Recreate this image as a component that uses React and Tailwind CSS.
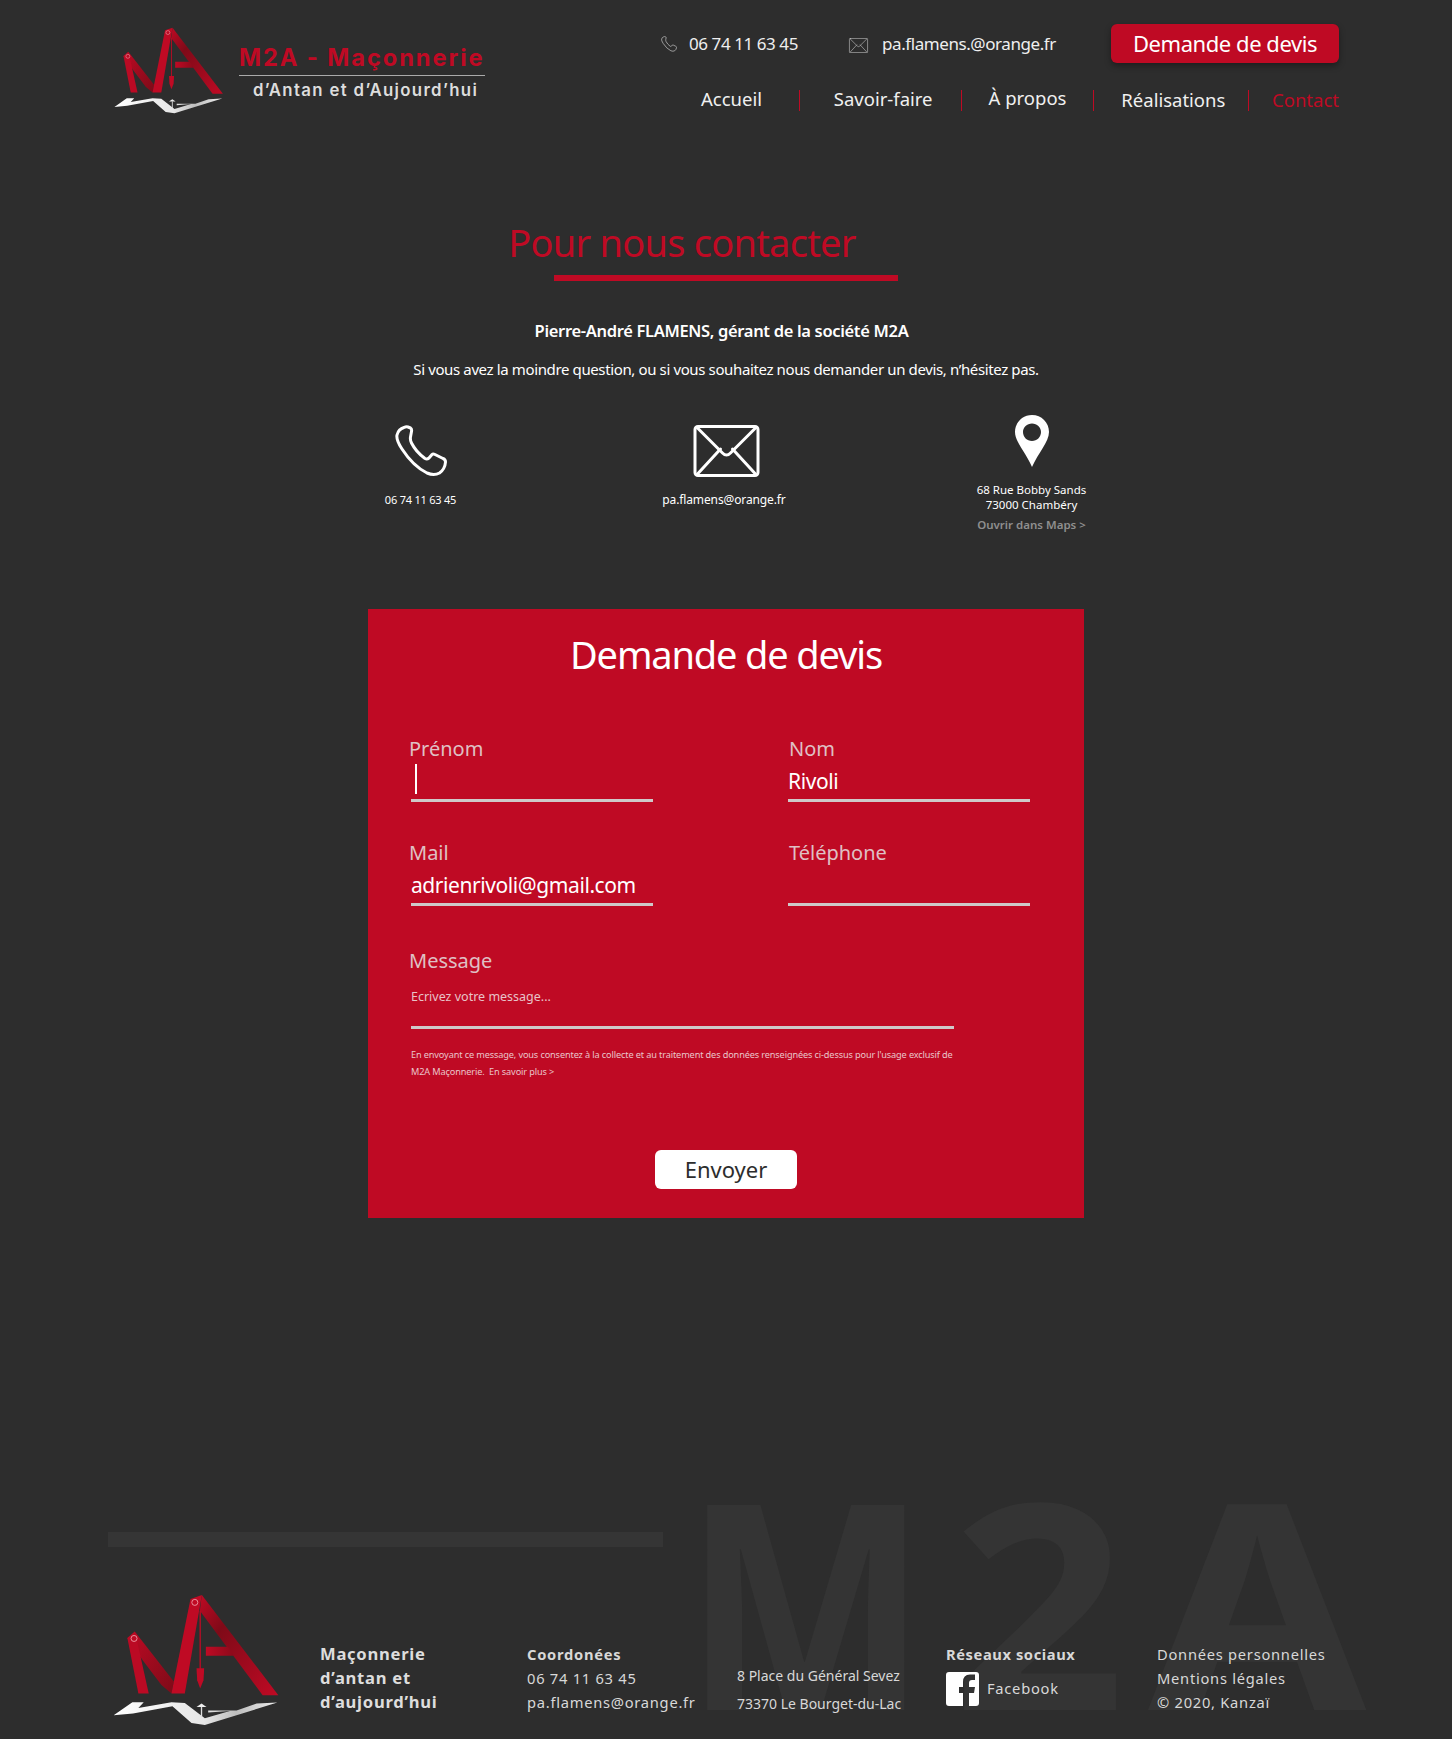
import React from 'react';

const Logo = ({ className, id }) => (
  <svg viewBox="70 100 500 395" className={className}>
    <defs>
      <linearGradient id={`${id}-a`} x1="0" y1="0" x2="1" y2="1">
        <stop offset="0" stopColor="#bf0a24" />
        <stop offset="0.3" stopColor="#7f0a18" />
        <stop offset="1" stopColor="#bf0a24" />
      </linearGradient>
      <linearGradient id={`${id}-b`} x1="0" y1="0" x2="1" y2="1">
        <stop offset="0" stopColor="#bf0a24" />
        <stop offset="1" stopColor="#7c0b18" />
      </linearGradient>
      <linearGradient id={`${id}-c`} x1="0" y1="0" x2="1" y2="0">
        <stop offset="0" stopColor="#bf0a24" />
        <stop offset="1" stopColor="#8a0a1a" />
      </linearGradient>
      <linearGradient id={`${id}-w`} x1="0" y1="0" x2="1" y2="0">
        <stop offset="0" stopColor="#ffffff" />
        <stop offset="0.55" stopColor="#e6e6e6" />
        <stop offset="0.75" stopColor="#bdbdbd" />
        <stop offset="1" stopColor="#ececec" />
      </linearGradient>
    </defs>
    <polygon points="113,232 135,212 252,362 245,398 215,372 160,300" fill={`url(#${id}-b)`} />
    <polygon points="113,232 138,222 177,398 146,398" fill="#bb0a24" />
    <polygon points="302,115 336,103 285,398 245,398" fill="#bf0a24" />
    <polygon points="336,103 565,403 518,403 330,150" fill={`url(#${id}-a)`} />
    <polygon points="348,258 414,258 433,285 348,285" fill={`url(#${id}-c)`} />
    <rect x="329" y="150" width="4" height="175" fill="#bf0a24" />
    <polygon points="320,322 343,322 341,358 331,383 322,358" fill="#bf0a24" />
    <circle cx="133" cy="233" r="9" fill="none" stroke="#f0a3ae" strokeWidth="2.5" />
    <circle cx="315" cy="125" r="9" fill="none" stroke="#f0a3ae" strokeWidth="2.5" />
    <polygon
      points="72,463 128,424 162,424 146,441 245,424 285,426 345,472 420,450 355,455 355,449 440,449 500,428 562,425 345,492 305,486 248,436 130,458"
      fill={`url(#${id}-w)`}
    />
    <polygon points="320,438 335,428 350,438" fill="#eeeeee" />
    <rect x="333" y="438" width="4" height="30" fill="#dddddd" />
  </svg>
);

const PhoneIcon = ({ className, strokeWidth = 3 }) => (
  <svg viewBox="0 0 52 52" className={className} fill="none" stroke="currentColor" strokeWidth={strokeWidth} strokeLinejoin="round">
    <path d="M13 2 L15.500 3 Q17 4 16.500 6.500 L15.500 12 Q15 15 16.500 18 Q21 27 30 33.500 Q32 34.500 34 33 L37 29.500 Q38 28.500 40 29.500 L48 33.500 Q50.500 34.500 50.500 37 Q50 44 44.500 48 Q39 51 32 48 Q18 41 7 24 Q1 15 2 10 Q3.500 4 9 2.500 Q11 1.500 13 2 Z" />
  </svg>
);

const MailIcon = ({ className, strokeWidth = 3 }) => (
  <svg viewBox="0 0 66 52" className={className} fill="none" stroke="currentColor" strokeWidth={strokeWidth} strokeLinejoin="round" strokeLinecap="round">
    <rect x="1.500" y="1.500" width="63" height="49" rx="3" />
    <path d="M4 3 L29 28 Q33 32 37 28 L62 3" />
    <path d="M4 49 L27 24 M62 49 L39 24" />
  </svg>
);

const PinIcon = ({ className }) => (
  <svg viewBox="0 0 34 52" className={className} fill="currentColor">
    <path fillRule="evenodd" d="M17 0 C7.500 0 0 7.500 0 17 C0 27 11 38 17 52 C23 38 34 27 34 17 C34 7.500 26.500 0 17 0 Z M17 8.500 C22 8.500 26 12.500 26 17 C26 22 22 26 17 26 C12 26 8 22 8 17 C8 12.500 12 8.500 17 8.500 Z" />
  </svg>
);

const Sep = () => <span className="w-px h-[21px] bg-[#bf0a24]" />;

const Field = ({ label, value, caret, labelClass, className }) => (
  <div className={className}>
    <div className={`text-[20px] leading-[26px] text-[#dfc0c4] ${labelClass || ''}`}>{label}</div>
    <div className="h-[40px] w-[242px] ml-[2px] border-b-[3px] border-[#cfc9c9] flex items-center text-[21px] tracking-[-0.02em] text-white">
      {caret && <span className="w-[2px] h-[30px] bg-white ml-[4px] -mt-[3px]" />}
      {value && <span className="mt-[3px]">{value}</span>}
    </div>
  </div>
);

const App = () => {
  return (
    <div className="relative w-[1452px] h-[1739px] overflow-hidden bg-[#2d2d2d] font-['Noto_Sans',sans-serif] text-white">
      {/* M2A watermark behind everything in the footer */}
      <div className="absolute left-0 top-[1440px] w-full h-[299px] font-bold text-[#343434] select-none">
        <div className="absolute left-[108px] top-[92px] w-[555px] h-[15px] bg-[#353535]" />
        <span className="absolute left-[684px] top-[19px] text-[287px] leading-[280px] origin-left scale-x-[0.9]">M</span>
        <span className="absolute left-[952px] top-[19px] text-[287px] leading-[280px] origin-left scale-x-[1.06]">2</span>
        <span className="absolute left-[1148px] top-[19px] text-[287px] leading-[280px] origin-left scale-x-[1.1]">A</span>
      </div>

      <header className="relative flex justify-between pl-[114px] pr-[113px] pt-[24px]">
        <div className="flex pt-[3px]">
          <Logo id="head" className="w-[110px] h-[87px]" />
          <div className="w-[246px] ml-[15px] mt-[18px] font-['Inter',sans-serif]">
            <div className="text-[23.700px] leading-[26px] font-bold tracking-[0.08em] text-[#bf0a24] whitespace-nowrap">M2A - Maçonnerie</div>
            <div className="h-px bg-[#aaaaaa] mt-[4px]" />
            <div className="text-[16.800px] leading-[22px] font-semibold tracking-[0.08em] text-[#dddddd] ml-[14px] mt-[3px] whitespace-nowrap">d’Antan et d’Aujourd’hui</div>
          </div>
        </div>
        <div className="w-[678px]">
          <div className="flex items-center h-[39px] text-[17px] tracking-[-0.025em] text-[#efefef]">
            <PhoneIcon className="w-[16px] h-[18px] text-[#bbbbbb]" strokeWidth={2.500} />
            <span className="ml-[12px] w-[159px] mt-[1px]">06 74 11 63 45</span>
            <MailIcon className="w-[21px] h-[15px] mt-[3px] text-[#cccccc]" strokeWidth={2} />
            <span className="ml-[13px] w-[229px] mt-[1px]">pa.flamens.@orange.fr</span>
            <button className="w-[228px] h-[39px] rounded-[6px] bg-[#bf0a24] text-[22px] tracking-[-0.02em] text-white shadow-[0_3px_6px_rgba(0,0,0,0.35)]">Demande de devis</button>
          </div>
          <nav className="flex items-center h-[26px] mt-[24px] pl-[39px] text-[18.500px] whitespace-nowrap text-[#f0f0f0]">
            <span className="w-[99px] pl-[1px] -mt-[2px]">Accueil</span>
            <Sep />
            <span className="w-[161px] pl-[34px] -mt-[2px]">Savoir-faire</span>
            <Sep />
            <span className="w-[132px] pl-[27px] -mt-[4px]">À propos</span>
            <Sep />
            <span className="w-[154px] pl-[27px]">Réalisations</span>
            <Sep />
            <span className="pl-[23px] text-[#bf0a24]">Contact</span>
          </nav>
        </div>
      </header>

      <main className="relative flex flex-col items-center mt-[103px]">
        <h1 className="text-[38px] leading-[50px] tracking-[-0.02em] text-[#bf0a24] mr-[88px]">Pour nous contacter</h1>
        <div className="w-[344px] h-[6px] bg-[#bf0a24] mt-[8px]" />
        <p className="text-[16.500px] leading-[24px] tracking-[-0.02em] font-semibold mt-[38px] mr-[9px]">Pierre-André FLAMENS, gérant de la société M2A</p>
        <p className="text-[15px] leading-[24px] tracking-[-0.025em] mt-[14px]">Si vous avez la moindre question, ou si vous souhaitez nous demander un devis, n’hésitez pas.</p>

        <div className="flex justify-between w-[731px] mt-[34px]">
          <div className="w-[120px] flex flex-col items-center pt-[10px]">
            <PhoneIcon className="w-[52px] h-[52px]" />
            <div className="text-[11px] leading-[16px] tracking-[-0.02em] mt-[15px]">06 74 11 63 45</div>
          </div>
          <div className="w-[120px] flex flex-col items-center pt-[10px]">
            <MailIcon className="w-[67px] h-[52px]" />
            <div className="text-[12px] leading-[16px] tracking-[-0.01em] mt-[15px] -ml-[4px] whitespace-nowrap">pa.flamens@orange.fr</div>
          </div>
          <div className="w-[120px] flex flex-col items-center">
            <PinIcon className="w-[34px] h-[52px]" />
            <div className="text-[11.500px] leading-[15px] mt-[15px] text-center whitespace-nowrap">68 Rue Bobby Sands<br />73000 Chambéry</div>
            <div className="text-[11.500px] leading-[16px] mt-[5px] font-semibold text-[#8f8f8f] whitespace-nowrap">Ouvrir dans Maps &gt;</div>
          </div>
        </div>

        <section className="w-[716px] h-[609px] mt-[76px] bg-[#bf0a24] pl-[41px] pt-[19px]">
          <h2 className="text-[38px] leading-[52px] tracking-[-0.03em] text-center -ml-[41px]">Demande de devis</h2>
          <div className="flex mt-[56px]">
            <Field label="Prénom" caret className="w-[377px]" />
            <Field label="Nom" value="Rivoli" labelClass="ml-[3px]" />
          </div>
          <div className="flex mt-[38px]">
            <Field label="Mail" value="adrienrivoli@gmail.com" className="w-[377px]" />
            <Field label="Téléphone" labelClass="ml-[3px]" />
          </div>
          <div className="text-[20px] leading-[26px] text-[#dfc0c4] mt-[42px]">Message</div>
          <div className="w-[543px] ml-[2px] h-[55px] border-b-[3px] border-[#cfc9c9] pt-[13px] text-[12.500px] leading-[20px] text-[#e8c3c8]">Ecrivez votre message...</div>
          <p className="w-[545px] ml-[2px] mt-[17px] text-[9.200px] leading-[17px] tracking-[-0.015em] text-[#eac5ca]">
            En envoyant ce message, vous consentez à la collecte et au traitement des données renseignées ci-dessus pour l'usage exclusif de M2A Maçonnerie.&nbsp; En savoir plus &gt;
          </p>
          <div className="flex justify-center -ml-[41px] mt-[70px]">
            <button className="w-[142px] h-[39px] rounded-[6px] bg-white text-[22px] text-[#2d2d2d]">Envoyer</button>
          </div>
        </section>
      </main>

      <footer className="absolute left-0 bottom-0 w-full h-[144px] flex pl-[113px] text-[14.700px] leading-[24px] tracking-[0.05em] text-[#d8d8d8]">
        <Logo id="foot" className="w-[167px] h-[132px] mr-[40px] -mt-[1px]" />
        <div className="w-[207px] pt-[47px] text-[16.600px] font-bold text-[#dddddd]">Maçonnerie<br />d’antan et<br />d’aujourd’hui</div>
        <div className="w-[210px] pt-[47px]">
          <div className="font-bold">Coordonées</div>
          <div>06 74 11 63 45</div>
          <div>pa.flamens@orange.fr</div>
        </div>
        <div className="w-[209px] pt-[69px] tracking-normal text-[14px]">
          <div>8 Place du Général Sevez</div>
          <div className="mt-[4px]">73370 Le Bourget-du-Lac</div>
        </div>
        <div className="w-[211px] pt-[47px]">
          <div className="font-bold tracking-[0.04em]">Réseaux sociaux</div>
          <div className="flex items-center mt-[6px]">
            <svg viewBox="0 0 33 34" className="w-[33px] h-[34px]">
              <path fill="#ffffff" fillRule="evenodd" d="M3 0 H30 Q33 0 33 3 V31 Q33 34 30 34 H23 V21 H28 L29 15 H23 V11 Q23 8 26 8 H29 V2.500 H24 Q17 2.500 17 10 V15 H13 V21 H17 V34 H3 Q0 34 0 31 V3 Q0 0 3 0 Z" />
            </svg>
            <span className="ml-[8px] -mt-[2px]">Facebook</span>
          </div>
        </div>
        <div className="pt-[47px]">
          <div>Données personnelles</div>
          <div>Mentions légales</div>
          <div>© 2020, Kanzaï</div>
        </div>
      </footer>
    </div>
  );
};

export default App;
